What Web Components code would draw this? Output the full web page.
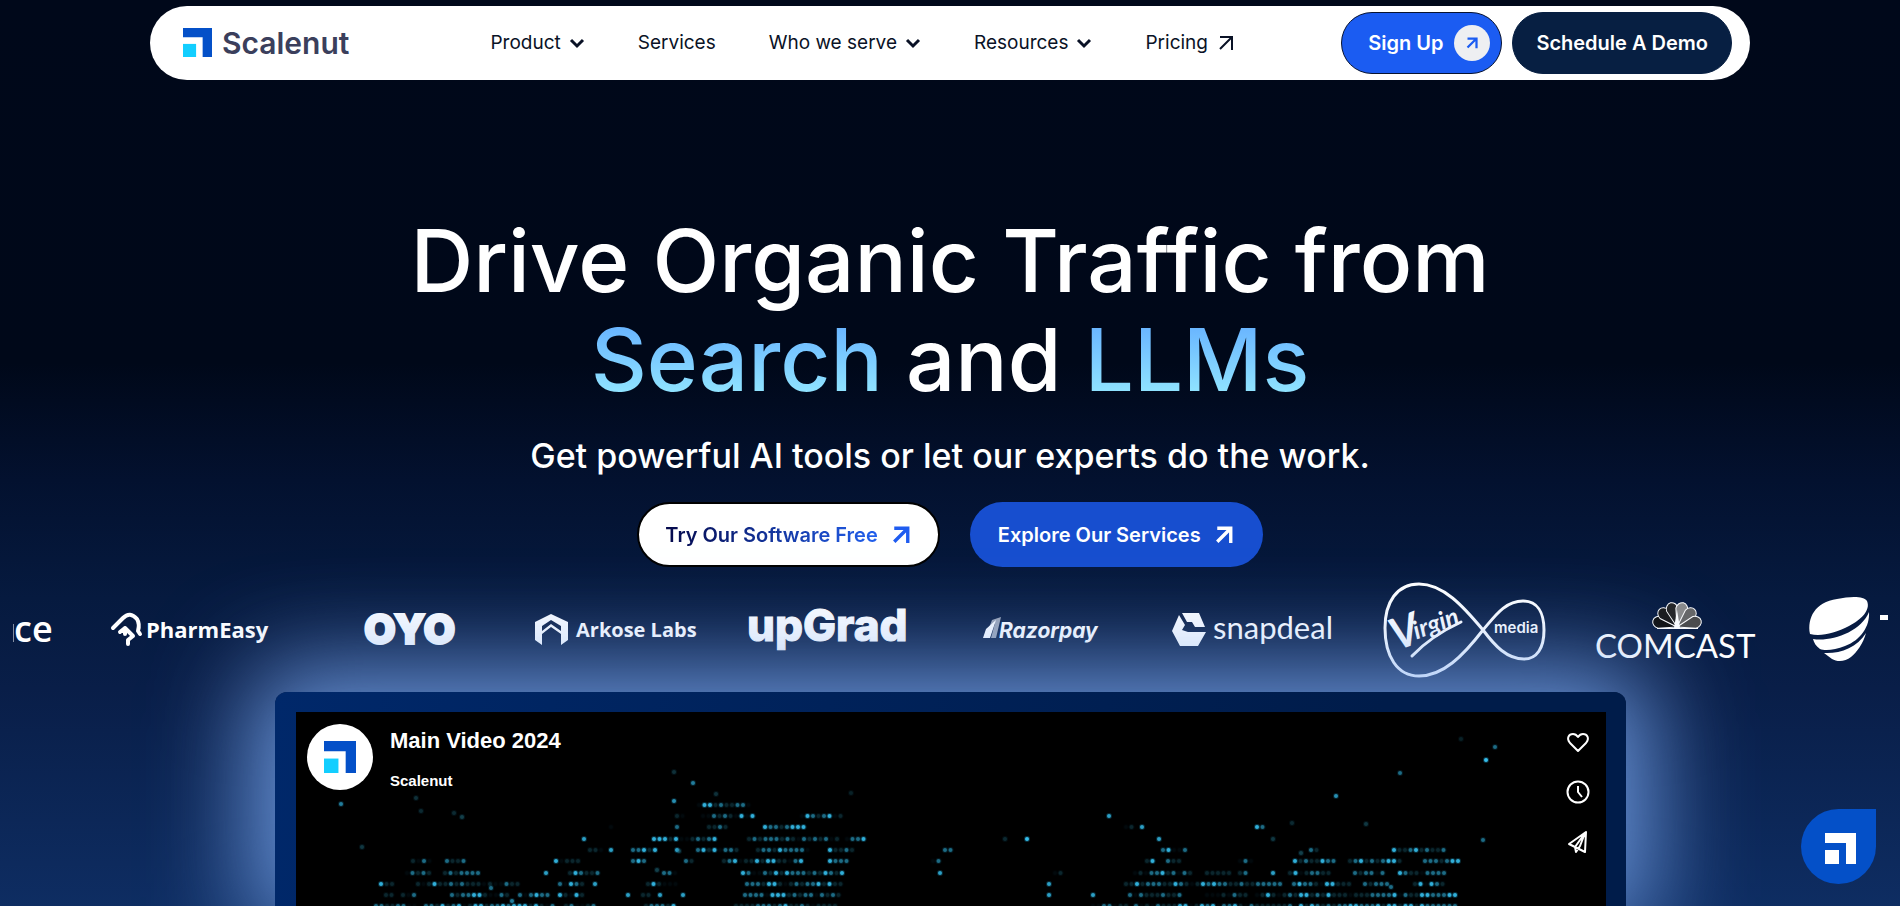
<!DOCTYPE html>
<html lang="en">
<head>
<meta charset="utf-8">
<meta name="viewport" content="width=device-width, initial-scale=1">
<title>Scalenut</title>
<style>
  body { margin: 0; background: #000819; font-family: Inter, "Liberation Sans", sans-serif; color: #fff; }
</style>
</head>
<body>
<page-hero>
  <site-header slot="header"></site-header>
  <hero-copy slot="copy"></hero-copy>
  <logo-strip slot="logos"></logo-strip>
  <video-card slot="video" heading="Main Video 2024" owner="Scalenut"></video-card>
</page-hero>
<chat-bubble></chat-bubble>

<script>
const define = (name, html, setup) => {
  const template = document.createElement('template');
  template.innerHTML = html;
  customElements.define(name, class extends HTMLElement {
    constructor() {
      super();
      this.attachShadow({ mode: 'open' }).append(template.content.cloneNode(true));
    }
    connectedCallback() { if (setup) setup(this, this.shadowRoot); }
  });
};

/* Brand mark: corner arm plus square */
define('brand-mark', `
  <style>
    :host { display: block; width: 29px; height: 29px; flex: none; }
    svg { display: block; width: 100%; height: 100%; }
  </style>
  <svg viewBox="0 0 31 31" aria-hidden="true">
    <path d="M0 0H31V31H21V10H0Z" fill="var(--arm, #0450c8)"/>
    <path d="M0 17H14V31H0Z" fill="var(--square, #12ceff)"/>
  </svg>`);

define('arrow-icon', `
  <style>
    :host { display: block; width: 16px; height: 16px; flex: none; }
    svg { display: block; width: 100%; height: 100%; }
    path { fill: none; stroke: currentColor; stroke-width: var(--weight, 2); }
  </style>
  <svg viewBox="0 0 16 16" aria-hidden="true"><path d="M2 2H14V15M14 2L2 14"/></svg>`);

define('nav-item', `
  <style>
    :host { display: block; }
    a, button { display: flex; align-items: center; gap: 8px; margin: 0; padding: 0; border: 0; background: none;
      font: 400 19px/28px Inter, "Liberation Sans", sans-serif; color: #0a1226; text-decoration: none; white-space: nowrap; cursor: pointer; }
    svg { display: block; width: 16px; height: 16px; }
    arrow-icon { margin-left: 2px; }
  </style>
  <div id="root"></div>`, (host, root) => {
  const kind = host.getAttribute('kind');
  const box = root.getElementById('root');
  if (kind === 'menu') {
    box.innerHTML = '<button type="button" aria-haspopup="true"><slot></slot><svg viewBox="0 0 16 16" aria-hidden="true"><path d="M2 5L8 11L14 5" fill="none" stroke="currentColor" stroke-width="3"/></svg></button>';
  } else {
    box.innerHTML = '<a href="#"><slot></slot>' + (kind === 'out' ? '<arrow-icon></arrow-icon>' : '') + '</a>';
  }
});

define('site-header', `
  <style>
    :host { display: block; padding: 6px 150px 0; }
    header { display: flex; align-items: center; height: 74px; box-sizing: border-box; padding: 0 18px 1px 33px; border-radius: 37px; background: #fff; }
    .brand { display: flex; align-items: center; gap: 10px; color: #3b3f5c; text-decoration: none; font: 600 30px/36px Inter, sans-serif; }
    nav { display: flex; gap: 53px; margin-left: 141px; }
    .actions { display: flex; gap: 10px; margin-left: auto; }
    button { display: flex; align-items: center; height: 62px; box-sizing: border-box; border: 1px solid #071f42; border-radius: 31px;
      font: 600 20px/28px Inter, sans-serif; color: #fff; white-space: nowrap; cursor: pointer; margin: 0; }
    .signup { gap: 11px; padding: 0 11px 0 26px; background: #1b5cf2; border-color: #081330; }
    .disc { display: grid; place-items: center; width: 36px; height: 36px; border-radius: 50%; background: #eeeff2; color: #1b5cf2; --weight: 3; }
    .disc arrow-icon { width: 12px; height: 12px; }
    .demo { padding: 0 23px; background: #071f42; }
  </style>
  <header>
    <a class="brand" href="#"><brand-mark></brand-mark><span>Scalenut</span></a>
    <nav aria-label="Main">
      <nav-item kind="menu">Product</nav-item>
      <nav-item>Services</nav-item>
      <nav-item kind="menu">Who we serve</nav-item>
      <nav-item kind="menu">Resources</nav-item>
      <nav-item kind="out">Pricing</nav-item>
    </nav>
    <div class="actions">
      <button type="button" class="signup">Sign Up<span class="disc"><arrow-icon></arrow-icon></span></button>
      <button type="button" class="demo">Schedule A Demo</button>
    </div>
  </header>`);

define('hero-copy', `
  <style>
    :host { display: block; text-align: center; padding-top: 131px; }
    h1 { margin: 0; font: 500 87px/99px Inter, sans-serif; }
    h1 em { font-style: normal; color: transparent; background: linear-gradient(180deg, #6ab6ff 20%, #92e6ff 85%); background-clip: text; -webkit-background-clip: text; }
    p { margin: 25px 0 24px; font: 500 34px/44px Inter, sans-serif; }
    .actions { display: flex; justify-content: center; gap: 30px; }
    button { display: flex; align-items: center; gap: 14px; box-sizing: border-box; height: 65px; margin: 0; border-radius: 33px;
      font: 600 20px/28px Inter, sans-serif; white-space: nowrap; cursor: pointer; --weight: 3; }
    button arrow-icon { width: 18px; height: 18px; }
    .light { padding: 0 28px 0 26px; border: 2px solid #000; background: #fff; color: #1f5cf0; }
    .light span { color: transparent; background: linear-gradient(90deg, #04084a, #2260ee); background-clip: text; -webkit-background-clip: text; }
    .blue { padding: 0 30px 0 28px; border: 0; background: #174ecf; color: #fff; }
  </style>
  <h1>Drive Organic Traffic from<br><em>Search</em> and <em>LLMs</em></h1>
  <p>Get powerful AI tools or let our experts do the work.</p>
  <div class="actions">
    <button type="button" class="light"><span>Try Our Software Free</span><arrow-icon></arrow-icon></button>
    <button type="button" class="blue">Explore Our Services<arrow-icon></arrow-icon></button>
  </div>`);

define('logo-strip', `
  <style>
    :host { display: block; margin: 15px 12px 12px 13px; overflow: hidden; }
    ul { display: flex; gap: 50px; margin: 0; padding: 0; list-style: none; }
    li { flex: none; }
    svg { display: block; width: 162px; height: 98px; fill: #fff; overflow: visible; }
    .tail { width: 48px; }
    .open { font-family: "Open Sans", sans-serif; font-weight: 700; }
    .inter { font-family: Inter, sans-serif; }
    .lato { font-family: Lato, sans-serif; }
    .line { fill: none; stroke: #fff; }
  </style>
  <ul>
    <li><svg class="tail" viewBox="0 0 48 98"><path d="M0 42H1V60H0Z" opacity=".5"/><text class="open" x="1" y="60" font-size="36" style="font-weight:600">ce</text></svg></li>
    <li><svg viewBox="0 0 162 98">
      <path class="line" stroke-width="4" stroke-linejoin="round" stroke-linecap="round" d="M2 46L12 36Q19 29 26 37Q29 42 27 49L29 52M9 50L14 46L22 54L17 58V62M14 46V52"/>
      <text class="open" x="35" y="56" font-size="22">PharmEasy</text></svg></li>
    <li><svg viewBox="0 0 162 98"><text class="inter" x="41" y="62" font-size="41" font-weight="900" stroke="#fff" stroke-width="2">OYO</text></svg></li>
    <li><svg viewBox="0 0 162 98">
      <path d="M0 40L16 32L33 40V58L26 63V52L16 45L7 52V63L0 58ZM7 44L16 38L26 44V49L16 42L7 49Z" fill-rule="evenodd"/>
      <text class="open" x="41" y="55" font-size="20">Arkose Labs</text></svg></li>
    <li><svg viewBox="0 0 162 98"><text class="inter" x="0" y="59" font-size="44" font-weight="800" stroke="#fff" stroke-width="1">upGrad</text></svg></li>
    <li><svg viewBox="0 0 162 98">
      <path d="M24 56L27 47L37 38L31 56Z"/><path d="M32 56L36 41L30 46L33 38L42 35L37 56Z" opacity=".6"/>
      <text class="inter" x="40" y="56" font-size="21" font-weight="700" font-style="italic">Razorpay</text></svg></li>
    <li><svg viewBox="0 0 162 98">
      <path d="M11 31H28L34 45H24L21 40H16ZM8 33L14 43L11 48L17 50H35L27 64H9L1 49Z"/>
      <text class="lato" x="42" y="57" font-size="31">snapdeal</text></svg></li>
    <li><svg viewBox="0 0 162 98">
      <path class="line" stroke-width="3" d="M36 2C60 2 80 24 100 48C112 64 124 77 141 77C154 77 161 66 161 48C161 30 154 19 140 19C122 19 112 34 100 48C80 74 60 94 36 94C14 94 2 74 2 46C2 20 14 2 36 2Z"/>
      <g transform="rotate(-20 16 68)" class="lato" font-weight="700" font-style="italic"><text x="13" y="68" font-size="44">V</text><text x="36" y="64" font-size="25">irgin</text></g>
      <path class="line" stroke-width="3" stroke-linecap="round" d="M29 74Q48 54 78 40"/>
      <text class="inter" x="111" y="51" font-size="15" font-weight="600">media</text></svg></li>
    <li><svg viewBox="0 0 162 98">
      <g id="fan" stroke="#fff" stroke-width="1"></g>
      <path d="M82 28L85 46H79Z"/><path d="M62 46H103V47H62Z"/>
      <text class="lato" x="0" y="76" font-size="33" font-weight="400">COMCAST</text></svg></li>
    <li><svg viewBox="0 0 162 98">
      <path d="M3 52C0 36 8 20 30 17C44 14 57 14 60 19C64 28 54 38 42 44C28 51 14 55 3 52Z"/>
      <path d="M6 57C24 60 54 50 62 30C63 44 54 58 38 64C28 68 18 69 13 67C9 64 7 61 6 57Z"/>
      <path d="M17 71C32 72 50 66 59 51C56 62 50 70 44 75C38 80 30 80 25 77Z"/>
      <path d="M73 33H90V38H73Z"/></svg></li>
  </ul>`, (host, root) => {
  const shades = ['#0c0c0c', '#181818', '#242424', '#8a8a8a', '#666', '#4a4a4a'];
  root.getElementById('fan').innerHTML = [-75, -45, -15, 15, 45, 75].map((turn, i) =>
    `<path transform="translate(82 45) rotate(${turn})" fill="${shades[i]}" d="M0 0L-6 -18A6 7 0 0 1 6 -18Z"/>`).join('');
});

define('video-card', `
  <style>
    :host { display: flex; flex: 1; box-sizing: border-box; min-height: 214px; margin: 0 274px 0 275px; padding: 20px 20px 0 21px; border-radius: 12px 12px 0 0;
      position: relative; background: linear-gradient(100deg, #00286a, #001c4a 80%); box-shadow: 0 0 100px 24px rgba(124, 170, 242, .85); }
    .screen { flex: 1; position: relative; display: flex; align-items: flex-start; overflow: hidden; background: #000; padding: 12px 16px 0 11px; }
    .map { position: absolute; inset: 0 0 auto 0; width: 100%; }
    .avatar { display: grid; place-items: center; width: 66px; height: 66px; border-radius: 50%; background: #fff; position: relative; }
    .avatar brand-mark { width: 32px; height: 32px; }
    .titles { position: relative; margin: 4px 0 0 17px; font-family: "Liberation Sans", sans-serif; font-weight: 700; }
    h2 { margin: 0 0 18px; font-size: 22px; line-height: 26px; }
    a { display: block; color: #fff; text-decoration: none; font-size: 15px; line-height: 18px; }
    .tools { position: relative; display: flex; flex-direction: column; gap: 26px; margin: 6px 0 0 auto; }
    .tools button { display: block; margin: 0; padding: 0; border: 0; background: none; width: 24px; height: 24px; color: #fff; cursor: pointer; }
    .tools svg { display: block; width: 24px; height: 24px; fill: none; stroke: currentColor; stroke-width: 2; stroke-linejoin: round; }
  </style>
  <div class="screen">
    <svg class="map" viewBox="0 0 1310 737" aria-hidden="true"></svg>
    <div class="avatar"><brand-mark></brand-mark></div>
    <div class="titles"><h2></h2><a href="#"></a></div>
    <div class="tools">
      <button type="button" aria-label="Like"><svg viewBox="0 0 24 24"><path d="M12 21L4 13C0 8 3 4 7 4Q10 4 12 7Q14 4 17 4C21 4 24 8 20 13Z"/></svg></button>
      <button type="button" aria-label="Watch later"><svg viewBox="0 0 24 24"><circle cx="12" cy="12" r="10.5"/><path d="M12 6V12L16 17"/></svg></button>
      <button type="button" aria-label="Share"><svg viewBox="0 0 24 24"><path d="M20 2L3 14L9 17L19 22ZM19 3L9 17L10 22L14 16Z"/></svg></button>
    </div>
  </div>`, (host, root) => {
  root.querySelector('h2').textContent = host.getAttribute('heading');
  root.querySelector('.titles a').textContent = host.getAttribute('owner');

  /* World map made of dots: runs of [from, to] for every row, then the loose sparks */
  const rows = [
    [93, [403, 455]],
    [104, [381, 388], [407, 459], [506, 546], [813, 814]],
    [115, [315, 319], [381, 386], [413, 432], [469, 509], [830, 840], [846, 847], [961, 968]],
    [127, [288, 289], [358, 420], [453, 541], [551, 568], [863, 864]],
    [138, [294, 305], [315, 316], [337, 364], [381, 382], [402, 445], [462, 512], [534, 557], [649, 656], [867, 892], [1015, 1022], [1098, 1150]],
    [149, [117, 138], [151, 170], [260, 284], [337, 349], [390, 399], [428, 509], [534, 552], [637, 644], [851, 858], [872, 886], [944, 956], [999, 1040], [1054, 1104], [1129, 1165]],
    [161, [111, 133], [149, 184], [250, 251], [274, 305], [368, 379], [447, 547], [644, 645], [759, 765], [839, 895], [911, 937], [944, 952], [977, 978], [994, 1036], [1059, 1089], [1104, 1152]],
    [172, [85, 100], [122, 190], [194, 226], [264, 290], [299, 300], [352, 384], [451, 546], [753, 754], [830, 984], [998, 1056], [1069, 1095], [1119, 1149]],
    [183, [90, 96], [107, 119], [156, 214], [224, 252], [264, 287], [332, 333], [347, 354], [364, 365], [387, 388], [449, 545], [753, 754], [797, 798], [834, 888], [911, 950], [961, 1164]],
    [194, [80, 120], [130, 260], [270, 300], [350, 380], [440, 540], [797, 830], [840, 1164]],
    [206, [90, 330], [440, 540], [840, 1164]],
    [217, [100, 300], [450, 530], [830, 1150]]
  ];
  const loose = [[45, 92, .6], [120, 86, .3], [125, 99, .25], [158, 101, .25], [166, 105, .4], [66, 135, .35], [378, 60, .3], [397, 71, .6], [420, 82, .3], [378, 89, .7],
    [731, 127, 1], [709, 127, .25], [555, 81, .2], [1040, 84, .7], [1104, 61, .5], [1190, 48, 1], [1199, 35, .5], [1165, 27, .2], [1070, 112, .35], [996, 111, .25], [977, 127, .35], [1187, 128, .5],
    [195, 176, .5], [216, 189, .6], [383, 139, .4], [361, 158, .4], [1005, 141, .4], [1095, 175, .5]];
  let seed = 29;
  const random = () => (seed = (seed * 16807) % 2147483647) / 2147483647;
  const dot = (x, y, power) =>
    `<circle cx="${x}" cy="${y}" r="3" fill="#1a90b8" opacity="${(power * .35).toFixed(2)}"/><circle cx="${x}" cy="${y}" r="2" fill="${power > .45 ? '#36bdea' : '#2a7f92'}" opacity="${power.toFixed(2)}"/>`;
  let out = '';
  for (const [y, ...runs] of rows)
    for (const [from, to] of runs)
      for (let x = from; x <= to; x += 5.5) {
        const r = random();
        out += dot(x, y, to - from < 2 ? .8 : r > .8 ? .9 : r > .45 ? .5 : r > .12 ? .24 : .06);
      }
  for (const [x, y, power] of loose) out += dot(x, y, power);
  root.querySelector('.map').innerHTML = out;
});

define('chat-bubble', `
  <style>
    :host { position: fixed; right: 24px; bottom: 22px; display: block; }
    button { display: grid; place-items: center; width: 75px; height: 75px; margin: 0; padding: 3px 0 0 3px; border: 0; border-radius: 50% 0 50% 50%; background: #0450c8; cursor: pointer; --arm: #fff; --square: #fff; }
    brand-mark { width: 31px; height: 31px; }
  </style>
  <button type="button" aria-label="Open chat"><brand-mark></brand-mark></button>`);

define('page-hero', `
  <style>
    :host { display: flex; flex-direction: column; min-height: 100vh; overflow: hidden;
      background: linear-gradient(180deg, #00081a 0, #000819 40%, #03112f 53%, #061a3f 66%, #091e48 76%, #0e2d62 100%); }
  </style>
  <slot name="header"></slot><slot name="copy"></slot><slot name="logos"></slot><slot name="video"></slot>`);
</script>
</body>
</html>
